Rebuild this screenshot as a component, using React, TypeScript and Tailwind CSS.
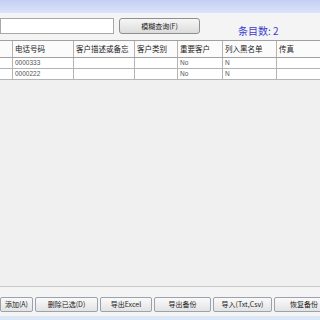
const cols = "grid grid-cols-[13px_61px_61px_43px_45px_54px_60px]";

const headers = ["", "电话号码", "客户描述或备忘", "客户类别", "重要客户", "列入黑名单", "传真"];

const rows = [
  ["", "0000333", "", "", "No", "N", ""],
  ["", "0000222", "", "", "No", "N", ""],
];

const buttons = [
  { label: "添加(A)", w: "w-[33px]" },
  { label: "删除已选(D)", w: "w-[63px]" },
  { label: "导出Excel", w: "w-[52px]" },
  { label: "导出备份", w: "w-[57px]" },
  { label: "导入(Txt,Csv)", w: "w-[59px]" },
  { label: "恢复备份", w: "w-[60px]" },
];

export default function App() {
  return (
    <div
      className="w-[320px] h-[320px] overflow-hidden bg-[#f0f0f0] flex flex-col"
      style={{ fontFamily: '"Noto Sans CJK SC", "Liberation Sans", sans-serif' }}
    >
      {/* title bar strip */}
      <div className="h-[13px] shrink-0 bg-gradient-to-b from-[#c3cff3] to-[#dbe3f9]" />

      {/* search row */}
      <div className="h-[27px] shrink-0 bg-[#f4f4f4] flex items-start pt-[5px]">
        <div className="w-[114px] h-[16px] bg-white border border-[#a8a8a8]" />
        <button className="ml-[5px] w-[81px] h-[16px] rounded-[3px] border border-[#8e8f8f] bg-gradient-to-b from-[#f6f6f6] to-[#dcdcdc] text-[7px] leading-none text-[#222] flex items-center justify-center">
          模糊查询(F)
        </button>
        <div className="ml-[38px] mt-[8px] text-[10px] leading-none text-[#3b3bd0] whitespace-nowrap">条目数: 2</div>
      </div>

      {/* grid */}
      <div className="flex-1 flex flex-col border-b border-[#c8c8c8]">
        <div className={`${cols} h-[18px] bg-[#fbfbfb] border-y border-[#a0a0a0]`}>
          {headers.map((h, i) => (
            <div
              key={i}
              className="border-r border-[#b4b4b4] text-[7.5px] leading-none text-[#222] flex items-center pl-[2px] whitespace-nowrap overflow-hidden"
            >
              {h}
            </div>
          ))}
        </div>
        {rows.map((r, ri) => (
          <div key={ri} className={`${cols} h-[11px] bg-white border-b border-[#b4b4b4]`}>
            {r.map((c, ci) => (
              <div
                key={ci}
                className="border-r border-[#b4b4b4] text-[6.5px] leading-none text-[#555] flex items-center pl-[2px] whitespace-nowrap"
                style={{ fontFamily: '"Liberation Sans", sans-serif' }}
              >
                {c}
              </div>
            ))}
          </div>
        ))}
      </div>

      {/* bottom buttons */}
      <div className="h-[33px] shrink-0 bg-[#f4f4f4] flex flex-col">
        <div className="flex gap-[2px] mt-[10px] h-[15px]">
          {buttons.map((b) => (
            <div
              key={b.label}
              className={`${b.w} shrink-0 h-[15px] rounded-[2px] border border-[#9aa3ad] bg-gradient-to-b from-[#fafafa] to-[#e3e3e3] text-[7px] leading-none text-[#222] flex items-center justify-center whitespace-nowrap`}
            >
              {b.label}
            </div>
          ))}
        </div>
        <div className="mt-auto h-[4px] bg-[#dbe6f7]" />
      </div>
    </div>
  );
}
